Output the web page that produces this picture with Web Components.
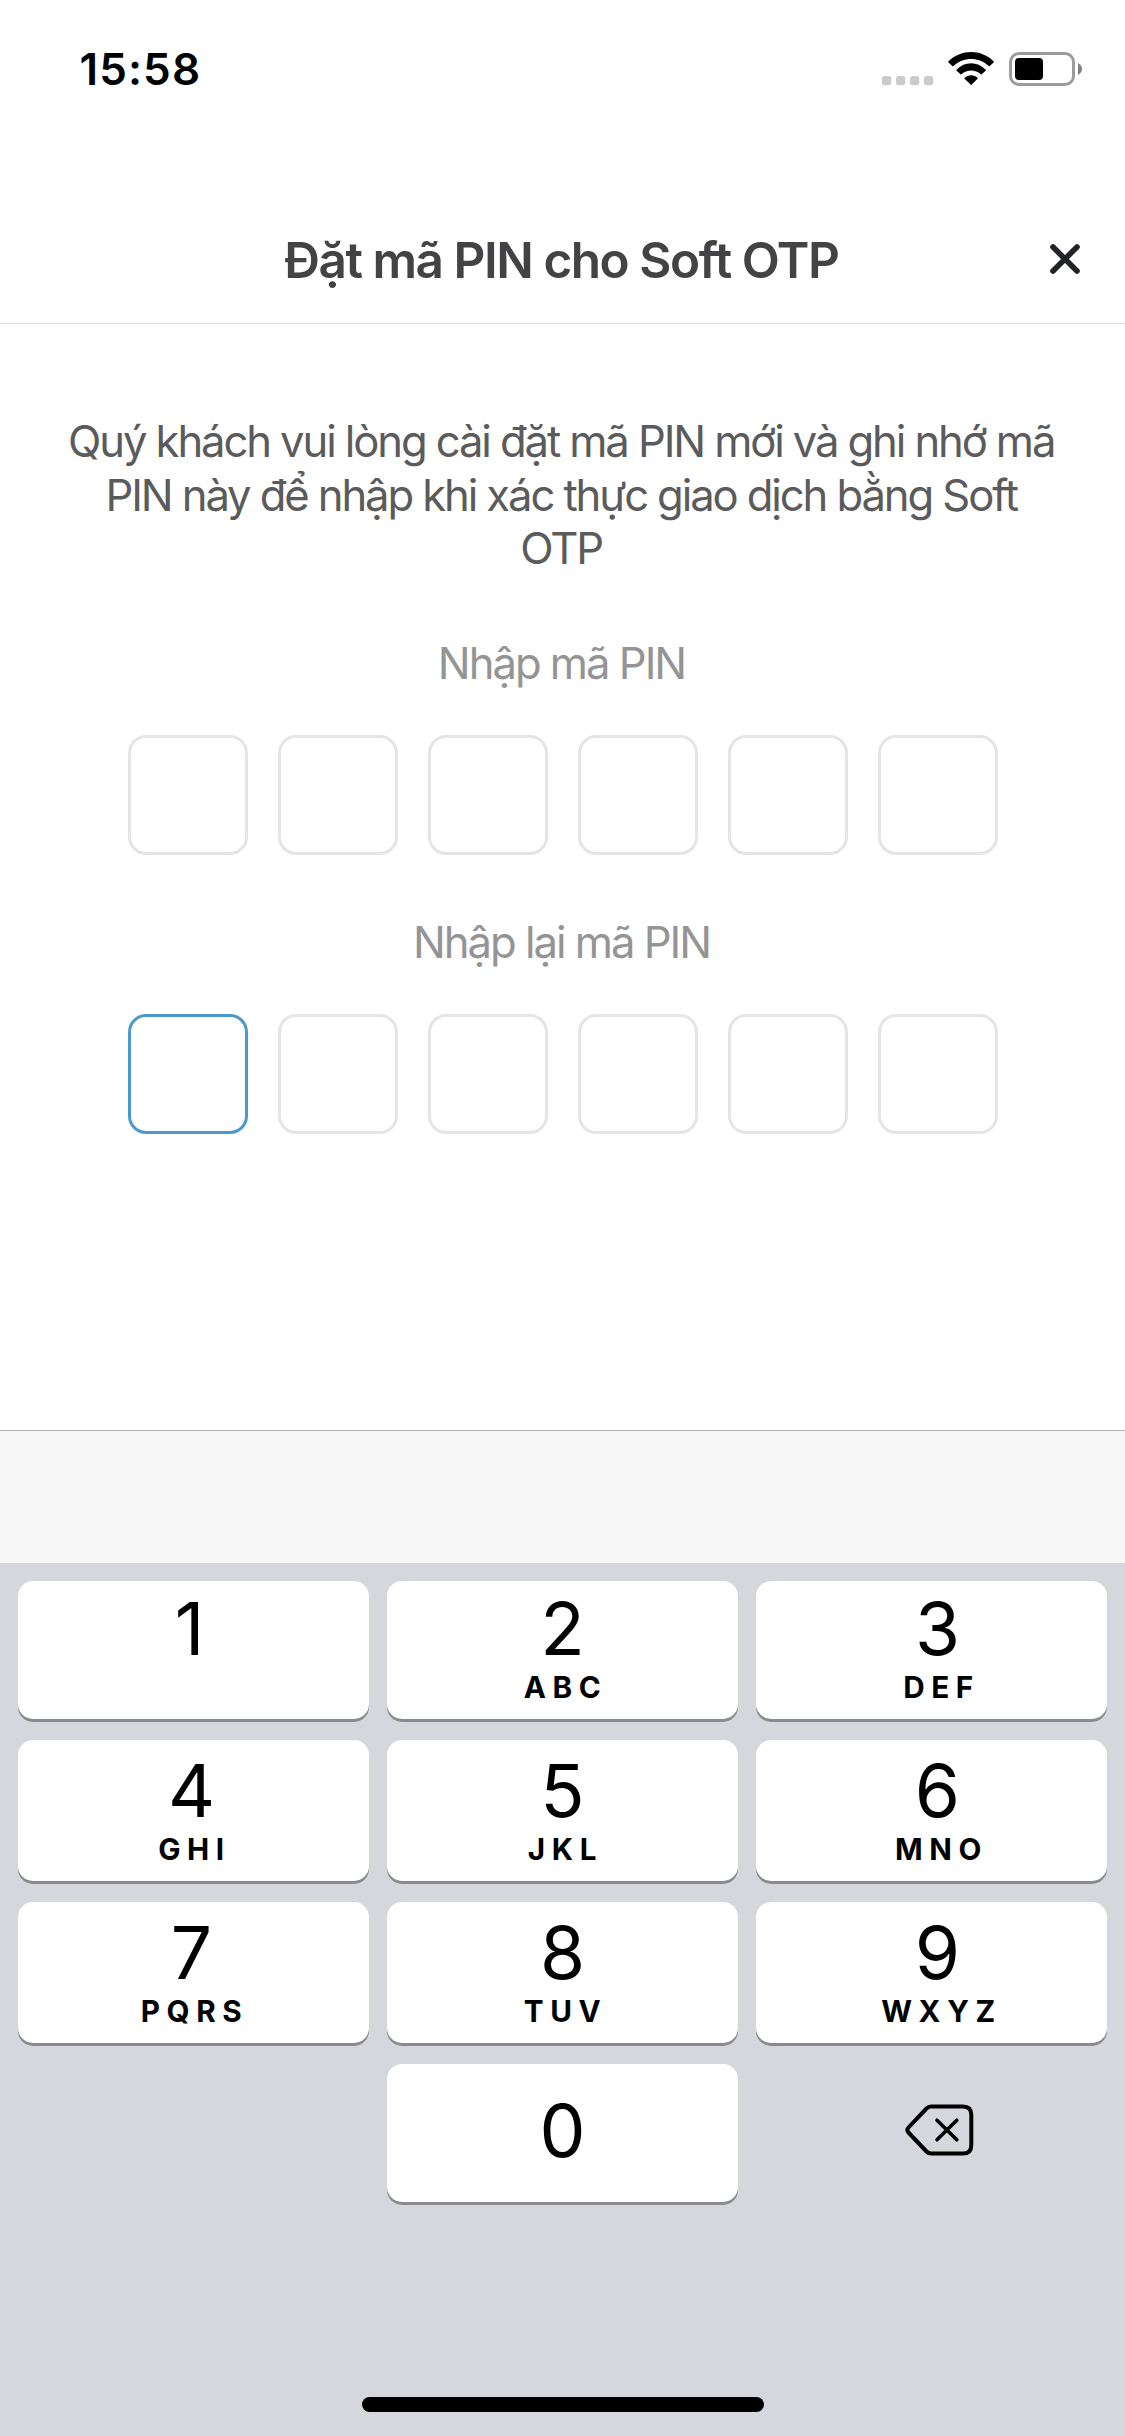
<!DOCTYPE html>
<html lang="vi">
<head>
<meta charset="utf-8">
<title>Đặt mã PIN cho Soft OTP</title>
<style>
html, body { margin: 0; padding: 0; }
body { width: 1125px; height: 2436px; overflow: hidden; background: #fff; font-family: Inter, "Liberation Sans", sans-serif; }
</style>
</head>
<body>
<pin-screen></pin-screen>
<script>
const define = (name, html, setup) => {
  const tpl = document.createElement('template');
  tpl.innerHTML = html;
  customElements.define(name, class extends HTMLElement {
    constructor() {
      super();
      this.attachShadow({ mode: 'open' }).append(tpl.content.cloneNode(true));
    }
    connectedCallback() { if (setup) setup(this, this.shadowRoot); }
  });
};

define('status-bar', `
<style>
:host { display: flex; justify-content: space-between; height: 132px; box-sizing: border-box; padding: 39px 42px 0 79.5px; color: #000; }
.time { font-size: 44px; font-weight: 600; line-height: 60px; letter-spacing: 1.1px; }
svg { display: block; margin-top: 11px; }
</style>
<span class="time">15:58</span>
<svg width="202" height="38" viewBox="881 50 202 38">
  <g fill="#cbcbcb">
    <rect x="882" y="76" width="9.3" height="9.3" rx="2.8"/><rect x="896" y="76" width="9.3" height="9.3" rx="2.8"/>
    <rect x="910" y="76" width="9.3" height="9.3" rx="2.8"/><rect x="924" y="76" width="9.3" height="9.3" rx="2.8"/>
  </g>
  <g fill="#000">
    <path d="M948.3 61.6 C961 48.9 981.200 48.9 993.9 61.600 Q994 62.1 993.6 62.500 L989.8 66 Q989.300 66.4 988.8 66 C979 56.6 963.2 56.6 953.400 66 Q952.9 66.4 952.400 66 L948.500 62.500 Q948.100 62.100 948.3 61.600 Z"/>
    <path d="M956.500 69.800 C964.700 61.200 977.500 61.200 985.700 69.800 Q986 70.300 985.600 70.700 L981.700 74.300 Q981.200 74.700 980.700 74.300 C975.300 69.300 966.900 69.300 961.500 74.300 Q961 74.700 960.500 74.300 L956.600 70.700 Q956.200 70.300 956.500 69.800 Z"/>
    <path d="M964.500 77.900 C968.200 74.300 974 74.300 977.700 77.900 Q978 78.400 977.600 78.800 L971.700 84.600 Q971.100 85.200 970.500 84.600 L964.600 78.800 Q964.200 78.400 964.500 77.900 Z"/>
  </g>
  <rect x="1010.5" y="53.500" width="63" height="31" rx="8.500" fill="none" stroke="#9c9c9c" stroke-width="3"/>
  <rect x="1015" y="58" width="28" height="22" rx="4" fill="#000"/>
  <path d="M1078 63 Q1082 65.300 1082 69 T1078 75 Z" fill="#808080"/>
</svg>`);

define('screen-header', `
<style>
:host { display: grid; grid-template-columns: 105px 1fr 105px; height: 192px; box-sizing: border-box; border-bottom: 1px solid #dcdddd; }
h1 { margin: 98px 0 0; font-size: 49.5px; font-weight: 600; line-height: 60px; letter-spacing: -1.46px; color: #434345; text-align: center; white-space: nowrap; padding-right: 2.4px; }
svg { display: block; margin: 110px 0 0 28px; }
</style>
<span></span>
<h1><slot></slot></h1>
<svg width="34" height="34" viewBox="0 0 34 34"><path d="M5 5 L29 29 M29 5 L5 29" stroke="#222326" stroke-width="5.6" stroke-linecap="round"/></svg>`);

define('intro-text', `
<style>
:host { display: block; margin-top: 91.4px; font-size: 43.6px; line-height: 53.35px; letter-spacing: -2.1px; color: #5b5b5c; text-align: center; white-space: nowrap; padding-right: 2.6px; }
</style>
<slot></slot>`);

define('pin-cell', `
<style>
:host { display: block; width: 120px; height: 120px; box-sizing: border-box; border: 3px solid #e5e5e5; border-radius: 18px; background: #fff; }
:host([active]) { border-color: #4b98cf; }
</style>`);

define('pin-field', `
<style>
:host { display: flex; flex-direction: column; gap: 44px; align-items: center; }
.label { font-size: 43.6px; line-height: 54px; letter-spacing: -2px; color: #949495; padding-right: 2px; white-space: nowrap; }
.cells { display: flex; gap: 30px; padding-left: 1px; }
</style>
<div class="label"><slot></slot></div>
<div class="cells"></div>`, (el, root) => {
  const cells = root.querySelector('.cells');
  if (cells.children.length) return;
  for (let i = 0; i < 6; i++) {
    const cell = document.createElement('pin-cell');
    if (el.getAttribute('active') === String(i)) cell.setAttribute('active', '');
    cells.append(cell);
  }
});

define('num-key', `
<style>
:host { display: flex; flex-direction: column; align-items: center; box-sizing: border-box; padding-top: var(--key-pad, 11.4px); border-radius: 15px; background: #fff; box-shadow: 0 3px 0 #8a8b8e; color: #000; }
.digit { font-size: 73px; line-height: 80px; transform: translateX(var(--digit-shift, var(--shift, 0))); }
.letters { margin-top: -.2px; font-size: 29.7px; font-weight: 650; line-height: 36px; letter-spacing: 6.6px; padding-left: 6px; transform: translateX(var(--shift, 0)); }
</style>
<span class="digit"></span>
<span class="letters"><slot></slot></span>`, (el, root) => {
  root.querySelector('.digit').textContent = el.getAttribute('digit');
});

define('delete-key', `
<style>
:host { display: flex; justify-content: center; padding-top: 38px; }
svg { display: block; transform: translateX(7.5px); }
</style>
<svg width="72" height="56" viewBox="903 2102 72 56" fill="none" stroke="#000" stroke-linecap="round" stroke-linejoin="round">
  <path d="M930.500 2106.500 H962.500 Q970.800 2106.500 970.800 2114.800 V2145.200 Q970.800 2153.500 962.500 2153.500 H930.500 Q928 2153.500 926 2151.500 L908 2132.500 Q905.700 2130 908 2127.500 L926 2108.500 Q928 2106.500 930.500 2106.500 Z" stroke-width="4"/>
  <path d="M936.500 2120.200 L956.300 2139.800 M956.300 2120.200 L936.500 2139.800" stroke-width="3.600"/>
</svg>`);

define('num-keyboard', `
<style>
:host { display: flex; flex-direction: column; height: 1006px; box-sizing: border-box; border-top: 1px solid #b2b3b4; background: #d5d7dd; }
.accessory { height: 132px; background: #f6f6f6; }
.keys { display: grid; grid-template-columns: repeat(3, 351px); grid-template-rows: 138px 141px 141px 138px; gap: 21px 18px; padding: 18px 18px 0; }
.top { --key-pad: 8.4px; }
.left { --shift: -2px; }
.one { --digit-shift: -4px; }
.right { --shift: 7px; --digit-shift: 6px; }
.zero { grid-column: 2; --key-pad: 27.4px; }
.home { width: 402px; height: 15px; border-radius: 8px; background: #000; margin: auto auto 24px; }
</style>
<div class="accessory"></div>
<div class="keys">
  <num-key digit="1" class="top left one"></num-key>
  <num-key digit="2" class="top">ABC</num-key>
  <num-key digit="3" class="top right">DEF</num-key>
  <num-key digit="4" class="left">GHI</num-key>
  <num-key digit="5">JKL</num-key>
  <num-key digit="6" class="right">MNO</num-key>
  <num-key digit="7" class="left">PQRS</num-key>
  <num-key digit="8">TUV</num-key>
  <num-key digit="9" class="right">WXYZ</num-key>
  <num-key digit="0" class="zero"></num-key>
  <delete-key></delete-key>
</div>
<div class="home"></div>`);

define('pin-screen', `
<style>
:host { display: flex; flex-direction: column; width: 1125px; height: 2436px; background: #fff; }
main { flex: 1; display: flex; flex-direction: column; }
.first { margin-top: 61.55px; }
.second { margin-top: 61px; }
</style>
<status-bar></status-bar>
<screen-header>Đặt mã PIN cho Soft OTP</screen-header>
<main>
  <intro-text>Quý khách vui lòng cài đặt mã PIN mới và ghi nhớ mã<br>PIN này để nhập khi xác thực giao dịch bằng Soft<br>OTP</intro-text>
  <pin-field class="first">Nhập mã PIN</pin-field>
  <pin-field class="second" active="0">Nhập lại mã PIN</pin-field>
</main>
<num-keyboard></num-keyboard>`);
</script>
</body>
</html>
